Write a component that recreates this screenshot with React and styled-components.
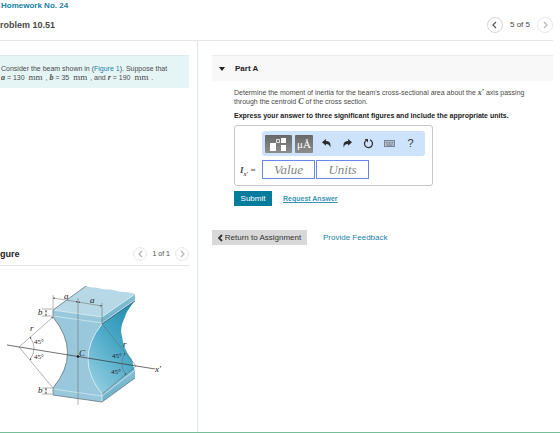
import React from "react";
import styled, { createGlobalStyle } from "styled-components";

const GlobalStyle = createGlobalStyle`
  * { box-sizing: border-box; }
  body { margin: 0; background: #fff; overflow: hidden; }
  button, input { font: inherit; margin: 0; padding: 0; }
`;

const Page = styled.div`
  min-height: 100vh;
  display: flex;
  flex-direction: column;
  border-bottom: 1px solid #76bd98;
  font: 7px/9px "Liberation Sans", Arial, sans-serif;
  color: #4b4b4b;
`;

const Header = styled.header`
  height: 41px;
  margin-right: 7px;
  border-bottom: 1px solid #e6e6e6;
`;

const Crumb = styled.a`
  display: block;
  padding: 1px 0 0 1px;
  font-size: 8px;
  line-height: 10px;
  font-weight: bold;
  color: #17809f;
  text-decoration: none;
`;

const TitleRow = styled.div`
  display: flex;
  align-items: center;
  justify-content: space-between;
  padding-top: 6px;
`;

const Title = styled.h1`
  margin: 0;
  font-size: 9px;
  line-height: 16px;
  color: #4a4a4a;
`;

const Pager = styled.nav`
  display: flex;
  align-items: center;
  gap: ${(p) => (p.$compact ? "5px" : "7px")};
  font-size: ${(p) => (p.$compact ? "7px" : "8px")};
  line-height: 16px;
`;

const RoundButton = styled.button`
  display: grid;
  place-items: center;
  width: ${(p) => (p.$small ? "14px" : "16px")};
  height: ${(p) => (p.$small ? "14px" : "16px")};
  border: 1px solid ${(p) => (p.$faint ? "#e8e8ec" : "#d6d6da")};
  border-radius: 50%;
  background: #fff;
  color: ${(p) => (p.$faint ? "#b4b4b4" : "#555")};
`;

const Columns = styled.div`
  flex: 1;
  display: grid;
  grid-template-columns: 198px minmax(0, 1fr);
`;

const Side = styled.aside`
  padding-top: 14px;
  padding-right: 8px;
  border-right: 1px solid #dfe5f0;
`;

const Intro = styled.p`
  margin: 0;
  min-height: 32px;
  padding: 8px 0 6px 1px;
  background: #e5f5f6;
  border-top: 1px solid #dcebed;
  white-space: nowrap;
`;

const Var = styled.i`
  font: italic bold 8px/9px "Liberation Serif", serif;
`;

const Unit = styled.span`
  font: 9px/9px "Liberation Serif", serif;
  margin: 0 1px 0 2px;
`;

const Link = styled.a`
  color: #1b83a6;
  text-decoration: none;
`;

const FigureHead = styled.div`
  display: flex;
  justify-content: space-between;
  align-items: center;
  height: 20px;
  margin-top: 158px;
  padding-bottom: 4px;
  border-bottom: 1px solid #e6e6e6;
`;

const FigureTitle = styled.h2`
  margin: 0;
  font-size: 9px;
  line-height: 12px;
  color: #222;
`;

const Drawing = styled.svg`
  display: block;
  width: 170px;
  height: 130px;
  margin-top: 15px;
  font: italic 9px "Liberation Serif", serif;
`;

const Main = styled.main`
  padding: 14px 7px 0 14px;
`;

const PartBar = styled.button`
  display: flex;
  align-items: center;
  gap: 10px;
  width: 100%;
  height: 26px;
  padding: 0 0 0 7px;
  border: 0;
  border-top: 1px solid #ebebeb;
  background: #f8f8f8;
  color: #222;
  font-size: 8px;
  font-weight: bold;
`;

const PartBody = styled.section`
  padding: 7px 0 0 22px;
`;

const Para = styled.p`
  margin: 0;
`;

const Instruction = styled.p`
  margin: 5px 0 5px;
  font-weight: bold;
  color: #222;
`;

const AnswerBox = styled.div`
  width: 199px;
  height: 61px;
  padding: 5px 7px 5px 5px;
  border: 1px solid #c6c6c6;
  border-radius: 3px;
`;

const Toolbar = styled.div`
  display: flex;
  align-items: center;
  height: 25px;
  margin-left: 22px;
  padding: 0 4px 0 3px;
  border-radius: 3px;
  background: #cde3fc;
`;

const ModeButton = styled.button`
  display: grid;
  place-items: center;
  width: ${(p) => (p.$wide ? "27px" : "18px")};
  height: 18px;
  margin-right: 3px;
  border: 0;
  border-radius: 1px;
  background: linear-gradient(#686868, #8d8d8d);
  color: #fff;
  font: 11px/18px "Liberation Serif", serif;
`;

const ToolButton = styled.button`
  display: grid;
  place-items: center;
  width: 21px;
  height: 18px;
  border: 0;
  background: none;
  color: #333;
  font-size: 11px;
`;

const Fields = styled.div`
  display: flex;
  align-items: center;
  gap: 1px;
  margin-top: 4px;
`;

const Label = styled.label`
  width: 21px;
  font: 9px/18px "Liberation Serif", serif;

  i { font-weight: bold; }
  sub { font-size: 6px; line-height: 1px; font-weight: bold; }
`;

const Field = styled.input`
  width: 53px;
  height: 19px;
  border: 1px solid #6889e4;
  border-radius: 0;
  background: #fff;
  text-align: center;
  font: italic 13px/17px "Liberation Serif", serif;
  color: #555;

  &::placeholder { color: #858585; opacity: 1; }
`;

const Actions = styled.div`
  display: flex;
  align-items: center;
  gap: 11px;
  margin-top: 5px;
`;

const Submit = styled.button`
  width: 38px;
  height: 15px;
  border: 0;
  background: #067c9d;
  color: #fff;
  font-size: 8px;
`;

const RequestLink = styled.a`
  font-size: 7px;
  font-weight: bold;
  color: #3c93b3;
`;

const Footer = styled.div`
  display: flex;
  align-items: center;
  gap: 16px;
  margin-top: 24px;
  font-size: 8px;
`;

const ReturnButton = styled.button`
  display: flex;
  align-items: center;
  justify-content: center;
  gap: 2px;
  width: 95px;
  height: 15px;
  border: 0;
  background: #d8d8d8;
  color: #333;
  white-space: nowrap;
`;

function Chevron({ right, bold }) {
  return (
    <svg width="5" height="8" viewBox="0 0 5 8" fill="none" stroke="currentColor" strokeWidth={bold ? 1.8 : 1.2}>
      <path d={right ? "M1 1l3 3-3 3" : "M4 1L1 4l3 3"} />
    </svg>
  );
}

function CurvedArrow({ flip }) {
  return (
    <svg width="9" height="9" viewBox="0 0 9 9">
      <path
        transform={flip ? "translate(9 0) scale(-1 1)" : undefined}
        d="M0 3.300L3.900 0v2.100c3.600 0 5.400 2.200 4.300 6.500C7.700 5.900 6.500 4.900 3.900 4.900v1.900z"
        fill="#2c2c2c"
      />
    </svg>
  );
}

function Beam() {
  return (
    <Drawing viewBox="0 0 170 130" role="img" aria-label="Beam cross section">
      <defs>
        <linearGradient id="web" x1="0.8" y1="0" x2="0.2" y2="1">
          <stop offset="0" stopColor="#238eb0" />
          <stop offset="0.45" stopColor="#4ba9c7" />
          <stop offset="1" stopColor="#94cfe1" />
        </linearGradient>
        <linearGradient id="rim" x1="0" y1="0" x2="0" y2="1">
          <stop offset="0" stopColor="#85bed5" />
          <stop offset="1" stopColor="#6eb2cc" />
        </linearGradient>
        <marker id="tip" viewBox="0 0 6 6" refX="5.500" refY="3" markerWidth="4" markerHeight="4" orient="auto-start-reverse">
          <path d="M0 .5L6 3 0 5.500z" fill="#444" />
        </marker>
      </defs>

      <path d="M102 43Q74 78 102 113L135 89C132 84 134 80 130 76C126 70 123 64 122 55C120 49 122 42 125 36C127 29 130 27 135 19z" fill="url(#web)" />
      <path d="M53 29L86 5c5 2 8 1 12 2 6 2 10 1 16 2 7 3 13 1 21 4L102 36z" fill="#b7d8e6" />
      <path d="M102 36L135 13V20L102 43z" fill="url(#rim)" />
      <path d="M102 113L135 88V97L102 121z" fill="url(#rim)" />
      <path d="M53 29L102 36V43Q74 78 102 113V121L53 114V107Q82 72 53 36z" fill="#99c8dc" />
      <path d="M53 35L102 42L135 19M53 108L102 115L135 89" fill="none" stroke="#c9e4ed" strokeWidth="0.9" />
      <path d="M53 29L102 36L135 13M102 43Q74 78 102 113V121" fill="none" stroke="#d2eaf1" strokeWidth="0.9" />
      <path d="M53 36Q82 72 53 107" fill="none" stroke="#55656d" strokeWidth="0.7" />
      <path d="M86 5L53 29V36M53 107V114L102 121L135 97" fill="none" stroke="#657982" strokeWidth="0.8" />
      <path d="M102 43L135 20" fill="none" stroke="#2d5969" strokeWidth="0.8" />

      <g fill="none" stroke="#666" strokeWidth="0.5">
        <path d="M7 64L155 88" stroke="#333" strokeWidth="0.7" />
        <path d="M78 17V124M53 14V29M102 22V43" />
        <path d="M42 28H52M42 35H52M42 107H52M42 113H52" />
        <path d="M19 66L53 107M102 43L136 85L102 113" />
        <path d="M19 66L53 36" markerEnd="url(#tip)" />
        <path d="M53 17L78 21" markerStart="url(#tip)" markerEnd="url(#tip)" />
        <path d="M78 21L102 25" markerStart="url(#tip)" markerEnd="url(#tip)" />
        <path d="M46 29V35" markerStart="url(#tip)" markerEnd="url(#tip)" />
        <path d="M46 107V113" markerStart="url(#tip)" markerEnd="url(#tip)" />
        <path d="M30 56Q38 67 30 79" markerStart="url(#tip)" markerEnd="url(#tip)" />
        <path d="M125 72Q118 83 126 94" markerStart="url(#tip)" markerEnd="url(#tip)" />
      </g>
      <circle cx="78" cy="75.500" r="1.200" fill="#111" />

      <g fill="#222">
        <text x="64" y="18">a</text>
        <text x="90" y="22">a</text>
        <text x="38" y="34">b</text>
        <text x="38" y="112">b</text>
        <text x="30" y="50">r</text>
        <text x="123" y="66">r</text>
        <text x="79" y="75">C</text>
        <text x="155" y="91">x′</text>
        <g fontStyle="normal" fontSize="7">
          <text x="34" y="63">45°</text>
          <text x="34" y="78">45°</text>
          <text x="112" y="77">45°</text>
          <text x="111" y="93">45°</text>
        </g>
      </g>
    </Drawing>
  );
}

export default function App() {
  return (
    <>
      <GlobalStyle />
      <Page>
        <Header>
          <Crumb href="#">Homework No. 24</Crumb>
          <TitleRow>
            <Title>roblem 10.51</Title>
            <Pager aria-label="Problems">
              <RoundButton aria-label="Previous problem"><Chevron /></RoundButton>
              <span>5 of 5</span>
              <RoundButton $faint aria-label="Next problem"><Chevron right /></RoundButton>
            </Pager>
          </TitleRow>
        </Header>

        <Columns>
          <Side>
            <Intro>
              Consider the beam shown in (<Link href="#figure">Figure 1</Link>). Suppose that
              <br />
              <Var>a</Var> = 130 <Unit>mm</Unit> , <Var>b</Var> = 35 <Unit>mm</Unit> , and <Var>r</Var> = 190 <Unit>mm</Unit> .
            </Intro>
            <FigureHead id="figure">
              <FigureTitle>gure</FigureTitle>
              <Pager $compact aria-label="Figures">
                <RoundButton $small $faint aria-label="Previous figure"><Chevron /></RoundButton>
                <span>1 of 1</span>
                <RoundButton $small $faint aria-label="Next figure"><Chevron right /></RoundButton>
              </Pager>
            </FigureHead>
            <Beam />
          </Side>

          <Main>
            <PartBar aria-expanded="true">
              <svg width="6" height="4" viewBox="0 0 6 4"><path d="M0 0h6L3 4z" fill="#222" /></svg>
              Part A
            </PartBar>
            <PartBody>
              <Para>
                Determine the moment of inertia for the beam's cross-sectional area about the <Var>x′</Var> axis passing
                <br />
                through the centroid <Var>C</Var> of the cross section.
              </Para>
              <Instruction>Express your answer to three significant figures and include the appropriate units.</Instruction>
              <AnswerBox>
                <Toolbar>
                  <ModeButton $wide aria-label="Templates">
                    <svg width="20" height="16" viewBox="0 0 20 16">
                      <path d="M1 7h6v8H1zM12 2h5v5h-5zM12 9h5v6h-5z" fill="#fff" />
                      <path d="M7.500 3.500h3v3h-3z" fill="none" stroke="#fff" strokeWidth="0.8" />
                    </svg>
                  </ModeButton>
                  <ModeButton>μÅ</ModeButton>
                  <ToolButton aria-label="Undo"><CurvedArrow /></ToolButton>
                  <ToolButton aria-label="Redo"><CurvedArrow flip /></ToolButton>
                  <ToolButton aria-label="Reset">
                    <svg width="11" height="11" viewBox="0 0 11 11">
                      <path d="M7 1.900A4 4 0 1 1 3.400 2.200" fill="none" stroke="#333" strokeWidth="1.300" />
                      <path d="M1.600 1.100H5V4.500z" fill="#333" />
                    </svg>
                  </ToolButton>
                  <ToolButton aria-label="Keyboard shortcuts">
                    <svg width="11" height="7" viewBox="0 0 11 7">
                      <rect x="0.500" y="0.500" width="10" height="6" fill="#b4c3d4" stroke="#758493" />
                      <path d="M2 2.400h7M2 4h7" stroke="#687684" strokeWidth="0.9" strokeDasharray="1 .5" />
                      <path d="M3 5.300h5" stroke="#687684" strokeWidth="0.7" />
                    </svg>
                  </ToolButton>
                  <ToolButton aria-label="Help">?</ToolButton>
                </Toolbar>
                <Fields>
                  <Label htmlFor="value"><i>I</i><sub><i>x′</i></sub> =</Label>
                  <Field id="value" placeholder="Value" />
                  <Field aria-label="Units" placeholder="Units" />
                </Fields>
              </AnswerBox>
              <Actions>
                <Submit>Submit</Submit>
                <RequestLink href="#">Request Answer</RequestLink>
              </Actions>
            </PartBody>
            <Footer>
              <ReturnButton><Chevron bold />Return to Assignment</ReturnButton>
              <Link href="#">Provide Feedback</Link>
            </Footer>
          </Main>
        </Columns>
      </Page>
    </>
  );
}
